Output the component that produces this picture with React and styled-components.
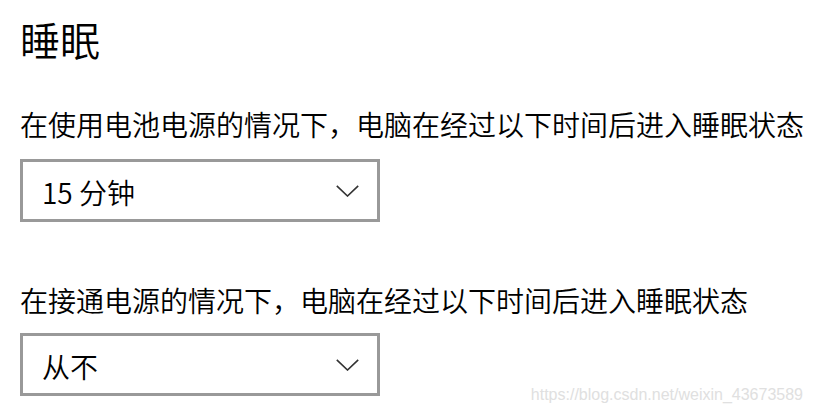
import React from "react";
import styled, { createGlobalStyle } from "styled-components";

const GlobalStyle = createGlobalStyle`
  html, body { margin: 0; padding: 0; background: #fff; }
  body { font-family: "Noto Sans CJK SC", "Noto Sans", sans-serif; color: #000; }
`;

const Page = styled.div`
  position: relative;
  width: 815px;
  height: 413px;
  overflow: hidden;
  padding: 19px 0 0 20px;
  box-sizing: border-box;
  display: flex;
  flex-direction: column;
`;

const Title = styled.h1`
  margin: 0;
  font-size: 40px;
  font-weight: 350;
  line-height: 40px;
  letter-spacing: 0;
`;

const Section = styled.div`
  display: flex;
  flex-direction: column;
  margin-top: ${(p) => p.$top}px;
`;

const Label = styled.div`
  font-size: 28px;
  font-weight: 350;
  line-height: 28px;
  white-space: nowrap;
`;

const Select = styled.div`
  margin-top: ${(p) => p.$gap}px;
  width: 360px;
  height: 63px;
  box-sizing: border-box;
  border: 3px solid #999999;
  display: flex;
  align-items: center;
  justify-content: space-between;
  padding: 2px 18px 0 19px;
  font-size: 28px;
  font-weight: 350;
  line-height: 28px;
`;

const Chevron = styled.svg`
  width: 23px;
  height: 12px;
  flex: none;
  margin-top: -2px;
`;

const Watermark = styled.div`
  position: absolute;
  right: 12px;
  bottom: 9px;
  font-family: "Liberation Sans", Arial, sans-serif;
  font-size: 16px;
  color: #e0e0e0;
  white-space: nowrap;
`;

const Arrow = () => (
  <Chevron viewBox="0 0 23 12">
    <polyline points="0.8,0.8 11.5,11 22.2,0.8" fill="none" stroke="#333" strokeWidth="1.6" />
  </Chevron>
);

export default function App() {
  return (
    <>
      <GlobalStyle />
      <Page>
        <Title>睡眠</Title>
        <Section $top={51}>
          <Label>在使用电池电源的情况下，电脑在经过以下时间后进入睡眠状态</Label>
          <Select $gap={21}>
            <span>15 分钟</span>
            <Arrow />
          </Select>
        </Section>
        <Section $top={64}>
          <Label>在接通电源的情况下，电脑在经过以下时间后进入睡眠状态</Label>
          <Select $gap={19}>
            <span>从不</span>
            <Arrow />
          </Select>
        </Section>
        <Watermark>https://blog.csdn.net/weixin_43673589</Watermark>
      </Page>
    </>
  );
}
